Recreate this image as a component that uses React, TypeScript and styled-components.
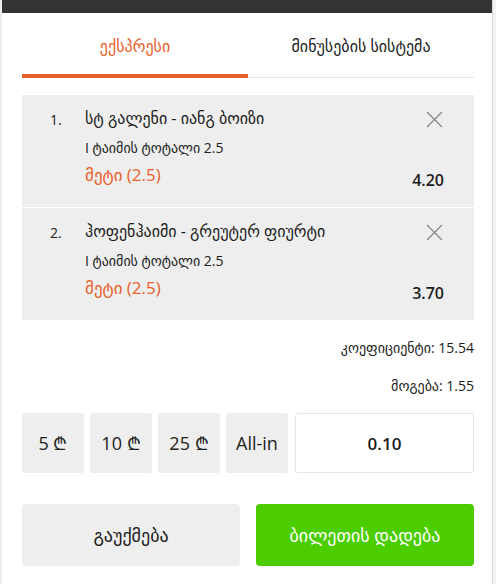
import styled, { createGlobalStyle } from "styled-components";

const GlobalStyle = createGlobalStyle`
  html, body {
    margin: 0;
    padding: 0;
    background: #fff;
  }
  body {
    font-family: "Open Sans", "DejaVu Sans", sans-serif;
    color: #222;
  }
`;

const bets = [
  {
    id: 1,
    match: "სტ გალენი - იანგ ბოიზი",
    market: "I ტაიმის ტოტალი 2.5",
    pick: "მეტი (2.5)",
    odds: "4.20",
  },
  {
    id: 2,
    match: "ჰოფენჰაიმი - გრეუტერ ფიურტი",
    market: "I ტაიმის ტოტალი 2.5",
    pick: "მეტი (2.5)",
    odds: "3.70",
  },
];

const quickStakes = ["5 ₾", "10 ₾", "25 ₾", "All-in"];

const Frame = styled.div`
  display: flex;
  width: 496px;
  height: 584px;
  overflow: hidden;
  border-left: 2px solid #ececec;
  box-sizing: border-box;
`;

const Main = styled.div`
  flex: 1;
  display: flex;
  flex-direction: column;
`;

const Scrollbar = styled.div`
  width: 3px;
  background: #f3f3f3;
  border-left: 1px solid #d6d6d6;
`;

const TopBar = styled.div`
  height: 13px;
  background: #333333;
`;

const Body = styled.div`
  padding: 0 18px 0 20px;
  display: flex;
  flex-direction: column;
`;

const Tabs = styled.div`
  display: flex;
  border-bottom: 1px solid #e6e6e6;
`;

const Tab = styled.div<{ $active?: boolean }>`
  flex: 1;
  height: 65px;
  display: flex;
  align-items: center;
  justify-content: center;
  padding-top: 5px;
  box-sizing: border-box;
  font-size: 16px;
  color: ${(p) => (p.$active ? "#e8612c" : "#1c1c1c")};
  border-bottom: 4px solid ${(p) => (p.$active ? "#e8612c" : "transparent")};
  border-radius: ${(p) => (p.$active ? "3px 3px 0 0" : "0")};
  margin-bottom: -1px;
`;

const BetList = styled.div`
  margin-top: 17px;
  display: flex;
  flex-direction: column;
  gap: 1px;
`;

const BetCard = styled.div`
  display: grid;
  grid-template-columns: 35px 1fr auto;
  background: #eeeeee;
  padding: 11px 30px 13px 28px;
  min-height: 112px;
  box-sizing: border-box;
`;

const Num = styled.div`
  font-size: 14px;
  padding-top: 4px;
  color: #222;
`;

const Info = styled.div`
  display: flex;
  flex-direction: column;
`;

const Match = styled.div`
  font-size: 16px;
  line-height: 24px;
  color: #1c1c1c;
`;

const Market = styled.div`
  font-size: 14px;
  line-height: 20px;
  margin-top: 8px;
  color: #222;
`;

const Pick = styled.div`
  font-size: 17px;
  line-height: 22px;
  margin-top: 6px;
  color: #e8612c;
`;

const Side = styled.div`
  display: flex;
  flex-direction: column;
  align-items: flex-end;
  justify-content: space-between;
`;

const CloseBtn = styled.div`
  width: 20px;
  height: 20px;
  margin-top: 3px;
  display: flex;
  align-items: center;
  justify-content: center;
`;

const Odds = styled.div`
  font-size: 16px;
  font-weight: 600;
  color: #1c1c1c;
  margin-bottom: 3px;
`;

const SummaryLine = styled.div<{ $top: number }>`
  text-align: right;
  font-size: 14px;
  margin-top: ${(p) => p.$top}px;
  color: #1c1c1c;
`;

const StakeRow = styled.div`
  display: flex;
  gap: 6px;
  margin-top: 18px;
  height: 60px;
`;

const StakeBtn = styled.div`
  width: 62px;
  background: #eeeeee;
  border-radius: 3px;
  display: flex;
  align-items: center;
  justify-content: center;
  font-size: 18px;
  color: #222;
`;

const StakeInput = styled.div`
  flex: 1;
  margin-left: 1px;
  border: 1px solid #e6e6e6;
  border-radius: 3px;
  display: flex;
  align-items: center;
  justify-content: center;
  font-size: 17px;
  font-weight: 600;
  color: #1c1c1c;
`;

const Actions = styled.div`
  display: flex;
  gap: 16px;
  margin-top: 31px;
  height: 62px;
`;

const ActionBtn = styled.div<{ $primary?: boolean }>`
  flex: 1;
  border-radius: 4px;
  display: flex;
  align-items: center;
  justify-content: center;
  font-size: 18px;
  background: ${(p) => (p.$primary ? "#4ccd00" : "#eeeeee")};
  color: ${(p) => (p.$primary ? "#ffffff" : "#1c1c1c")};
`;

const CloseIcon = () => (
  <svg width="17" height="17" viewBox="0 0 17 17">
    <path d="M1 1L16 16M16 1L1 16" stroke="#8a8a8a" strokeWidth="1.4" fill="none" />
  </svg>
);

export default function App() {
  return (
    <>
      <GlobalStyle />
      <Frame>
        <Main>
          <TopBar />
          <Body>
            <Tabs>
              <Tab $active>ექსპრესი</Tab>
              <Tab>მინუსების სისტემა</Tab>
            </Tabs>
            <BetList>
              {bets.map((b) => (
                <BetCard key={b.id}>
                  <Num>{b.id}.</Num>
                  <Info>
                    <Match>{b.match}</Match>
                    <Market>{b.market}</Market>
                    <Pick>{b.pick}</Pick>
                  </Info>
                  <Side>
                    <CloseBtn>
                      <CloseIcon />
                    </CloseBtn>
                    <Odds>{b.odds}</Odds>
                  </Side>
                </BetCard>
              ))}
            </BetList>
            <SummaryLine $top={18}>კოეფიციენტი: 15.54</SummaryLine>
            <SummaryLine $top={19}>მოგება: 1.55</SummaryLine>
            <StakeRow>
              {quickStakes.map((s) => (
                <StakeBtn key={s}>{s}</StakeBtn>
              ))}
              <StakeInput>0.10</StakeInput>
            </StakeRow>
            <Actions>
              <ActionBtn>გაუქმება</ActionBtn>
              <ActionBtn $primary>ბილეთის დადება</ActionBtn>
            </Actions>
          </Body>
        </Main>
        <Scrollbar />
      </Frame>
    </>
  );
}
